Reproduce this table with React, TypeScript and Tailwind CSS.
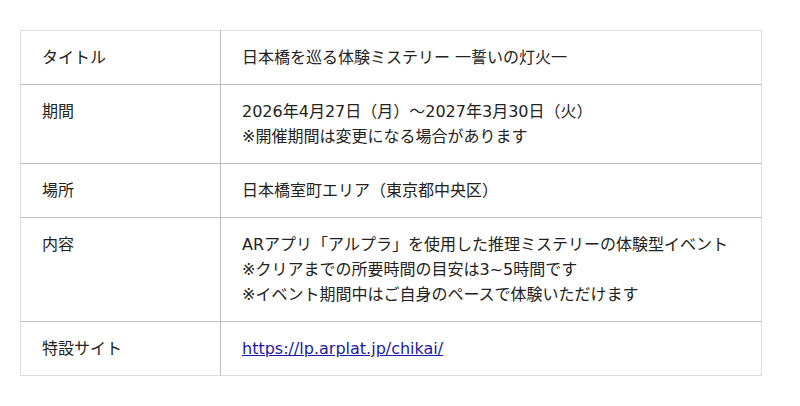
import React from "react";

const rows: { label: string; lines: React.ReactNode[] }[] = [
  { label: "タイトル", lines: ["日本橋を巡る体験ミステリー 一誓いの灯火一"] },
  {
    label: "期間",
    lines: [
      "2026年4月27日（月）～2027年3月30日（火）",
      "※開催期間は変更になる場合があります",
    ],
  },
  { label: "場所", lines: ["日本橋室町エリア（東京都中央区）"] },
  {
    label: "内容",
    lines: [
      "ARアプリ「アルプラ」を使用した推理ミステリーの体験型イベント",
      "※クリアまでの所要時間の目安は3~5時間です",
      "※イベント期間中はご自身のペースで体験いただけます",
    ],
  },
  {
    label: "特設サイト",
    lines: [
      <a key="l" href="#" className="text-[#1a1aa6] underline">
        https://lp.arplat.jp/chikai/
      </a>,
    ],
  },
];

export default function App() {
  return (
    <div
      className="w-[800px] h-[406px] bg-white pt-[30px] pl-[20px]"
      style={{ fontFamily: '"DejaVu Sans", "Noto Sans CJK JP", sans-serif' }}
    >
      <table className="w-[742px] border-collapse text-[16px] leading-[25px] text-[#222]">
        <tbody>
          {rows.map((r, i) => (
            <tr
              key={i}
              className={
                i === 0
                  ? "border-t border-[#dcdcdc]"
                  : "border-t border-[#bdbdbd]"
              }
            >
              <td
                className={`w-[200px] align-top pl-[21px] pt-[14px] pb-[14px] border-l border-[#dcdcdc] border-r border-r-[#bdbdbd] ${
                  i === rows.length - 1 ? "border-b border-b-[#dcdcdc]" : ""
                }`}
              >
                {r.label}
              </td>
              <td
                className={`align-top pl-[21px] pt-[14px] pb-[14px] border-r border-[#dcdcdc] ${
                  i === rows.length - 1 ? "border-b border-b-[#dcdcdc]" : ""
                }`}
              >
                {r.lines.map((l, j) => (
                  <div key={j}>{l}</div>
                ))}
              </td>
            </tr>
          ))}
        </tbody>
      </table>
    </div>
  );
}
